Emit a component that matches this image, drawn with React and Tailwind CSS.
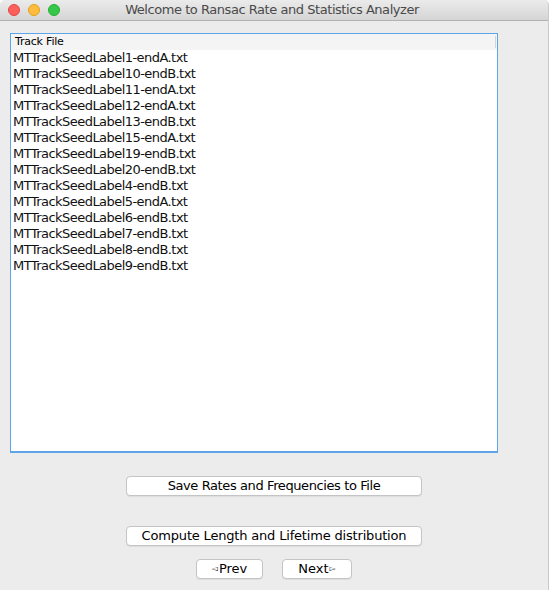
export default function App() {
  const files = [
    "MTTrackSeedLabel1-endA.txt",
    "MTTrackSeedLabel10-endB.txt",
    "MTTrackSeedLabel11-endA.txt",
    "MTTrackSeedLabel12-endA.txt",
    "MTTrackSeedLabel13-endB.txt",
    "MTTrackSeedLabel15-endA.txt",
    "MTTrackSeedLabel19-endB.txt",
    "MTTrackSeedLabel20-endB.txt",
    "MTTrackSeedLabel4-endB.txt",
    "MTTrackSeedLabel5-endA.txt",
    "MTTrackSeedLabel6-endB.txt",
    "MTTrackSeedLabel7-endB.txt",
    "MTTrackSeedLabel8-endB.txt",
    "MTTrackSeedLabel9-endB.txt",
  ];
  const font = { fontFamily: '"DejaVu Sans", "Noto Sans", sans-serif' };
  const btn =
    "h-[20px] bg-white border border-[#c4c4c4] rounded-[4px] shadow-[0_1px_0_rgba(0,0,0,0.06)] text-[13px] leading-[18px] text-black flex items-center justify-center";
  return (
    <div className="w-[550px] h-[590px] bg-white" style={font}>
      <div className="w-[549px] h-[590px] bg-[#ececec] border-r border-[#c9c9c9] rounded-t-[5px] overflow-hidden flex flex-col">
        <div className="h-[21px] shrink-0 grid grid-cols-[1fr_auto_1fr] items-center bg-gradient-to-b from-[#ebebeb] to-[#d5d5d5] border-b border-[#b1b1b1]">
          <div className="flex items-center gap-[8px] pl-[8px]">
            <span className="w-[12px] h-[12px] rounded-full bg-[#fc605c] border border-[#e2463f]" />
            <span className="w-[12px] h-[12px] rounded-full bg-[#fdbc40] border border-[#e1a116]" />
            <span className="w-[12px] h-[12px] rounded-full bg-[#34c84a] border border-[#2aac2c]" />
          </div>
          <div className="text-[13px] text-[#4a4a4a] leading-[20px] tracking-[-0.45px] pr-[4px]">
            Welcome to Ransac Rate and Statistics Analyzer
          </div>
          <div />
        </div>
        <div className="flex flex-col pl-[10px] pt-[12px]">
          <div className="w-[488px] h-[420px] bg-white border border-[#5ea5e7] border-b-2 flex flex-col">
            <div className="h-[16px] bg-[#f4f4f4] flex items-center justify-between pl-[4px] pr-[1px]">
              <span className="text-[11px] leading-[14px] text-black tracking-[-0.2px]">Track File</span>
              <span className="w-px h-[12px] bg-[#d4d4d4]" />
            </div>
            {files.map((f) => (
              <div key={f} className="h-[16px] pl-[2px] text-[13px] leading-[16px] text-[#111] tracking-[-0.55px]">
                {f}
              </div>
            ))}
          </div>
        </div>
        <div className="flex flex-col items-center pt-[23px]">
          <div className={`${btn} w-[296px] tracking-[-0.4px]`}>Save Rates and Frequencies to File</div>
          <div className={`${btn} w-[296px] mt-[30px] tracking-[-0.18px]`}>Compute Length and Lifetime distribution</div>
          <div className="flex gap-[19px] mt-[13px]">
            <div className={`${btn} w-[67px]`}>
              <span className="text-[8px] mr-[1px]">◅</span>Prev
            </div>
            <div className={`${btn} w-[70px]`}>
              Next<span className="text-[8px] ml-[1px]">▻</span>
            </div>
          </div>
        </div>
      </div>
    </div>
  );
}
